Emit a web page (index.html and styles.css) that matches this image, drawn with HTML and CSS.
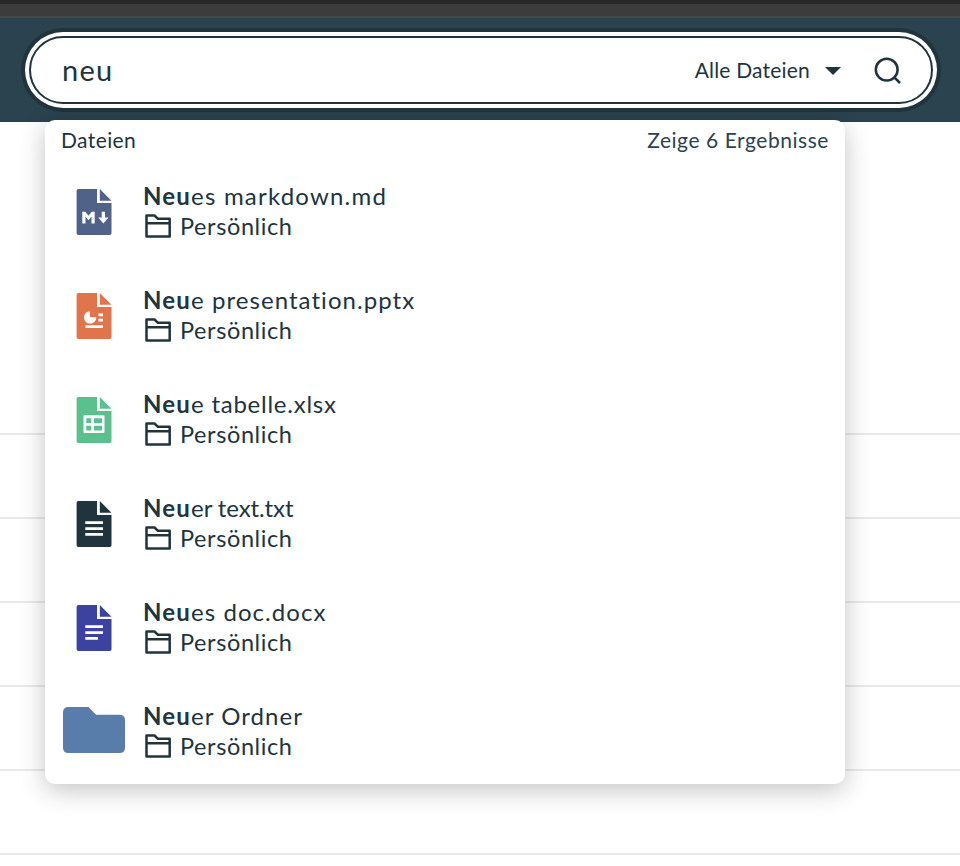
FILE: index.html
```html
<!DOCTYPE html>
<html lang="de">
<head>
<meta charset="utf-8">
<title>Suche</title>
<link rel="stylesheet" href="styles.css">
</head>
<body>
<svg class="defs" width="0" height="0" aria-hidden="true">
  <symbol id="page" viewBox="0 0 36 48"><path d="M3 1H21V15H35.500V45.200Q35.500 47 33.700 47H2.400Q.6 47 .6 45.200V2.800Q.6 1 2.400 1Z"/><path d="M23.800 1 35.500 12.800H23.800Z"/></symbol>
  <symbol id="location" viewBox="0 0 28 26"><path d="M2.500 2.500H10.500L14 5.800H25.700V23.500H2.500ZM2.500 10.200H25.700" fill="none" stroke="currentColor" stroke-width="2.500" stroke-linejoin="round"/></symbol>
</svg>
<header class="topbar">
  <div class="search">
    <span class="query">neu</span>
    <span class="scope">Alle Dateien</span>
    <svg class="caret" viewBox="0 0 16 8"><path d="M0 0H16L8 8Z"/></svg>
    <svg class="lens" viewBox="0 0 28 28"><circle cx="12.700" cy="12.700" r="10.900"/><path d="M20.300 20.300 26 26"/></svg>
  </div>
  <section class="results">
    <div class="results-head"><span class="group">Dateien</span><span class="count">Zeige 6 Ergebnisse</span></div>
    <ul>
      <li>
        <svg class="file md" viewBox="0 0 36 48"><use href="#page"/><path class="mark" d="M6.300 35.500V23.700H9.300L12.500 27.700 15.700 23.700H18.700V35.500H15.500V28.500L12.500 32.200 9.500 28.500V35.500ZM25.700 23.700H29V29.500H32.500L27.300 35.500 22.200 29.500H25.700Z"/></svg>
        <div class="info"><p class="name wide"><b>Neu</b>es markdown.md</p><p class="place"><svg><use href="#location"/></svg>Persönlich</p></div>
      </li>
      <li>
        <svg class="file pptx" viewBox="0 0 36 48"><use href="#page"/><path class="mark" d="M14 19.200V25.200H20.300A6.200 6.200 0 1 1 14 19.200ZM22.500 21.500H27V24.200H22.500ZM22.500 26.700H27V29.400H22.500ZM9.500 33.200H27V36H9.500Z"/></svg>
        <div class="info"><p class="name"><b>Neu</b>e presentation.pptx</p><p class="place"><svg><use href="#location"/></svg>Persönlich</p></div>
      </li>
      <li>
        <svg class="file xlsx" viewBox="0 0 36 48"><use href="#page"/><path class="mark" fill-rule="evenodd" d="M8.500 19.300H27.500Q28.500 19.300 28.500 20.300V36Q28.500 37 27.500 37H8.500Q7.500 37 7.500 36V20.300Q7.500 19.300 8.500 19.300ZM10.300 22.300V27H15.300V22.300ZM18 22.300V27H26V22.300ZM10.300 29.700V34.400H15.300V29.700ZM18 29.700V34.400H26V29.700Z"/></svg>
        <div class="info"><p class="name snug"><b>Neu</b>e tabelle.xlsx</p><p class="place"><svg><use href="#location"/></svg>Persönlich</p></div>
      </li>
      <li>
        <svg class="file txt" viewBox="0 0 36 48"><use href="#page"/><path class="mark" d="M9.300 21.200H27V24H9.300ZM9.300 27.200H27V30H9.300ZM9.300 33H27V35.800H9.300Z"/></svg>
        <div class="info"><p class="name tight"><b>Neu</b>er text.txt</p><p class="place"><svg><use href="#location"/></svg>Persönlich</p></div>
      </li>
      <li>
        <svg class="file docx" viewBox="0 0 36 48"><use href="#page"/><path class="mark" d="M9.300 21.200H27V24H9.300ZM9.300 27.200H27V30H9.300ZM9.300 33H22V35.800H9.300Z"/></svg>
        <div class="info"><p class="name"><b>Neu</b>es doc.docx</p><p class="place"><svg><use href="#location"/></svg>Persönlich</p></div>
      </li>
      <li>
        <svg class="folder" viewBox="0 0 64 48"><path d="M6.500 1H26.500L34 8.700H57.500Q63 8.700 63 14.200V41.500Q63 47 57.500 47H6.500Q1 47 1 41.500V6.500Q1 1 6.500 1Z"/></svg>
        <div class="info"><p class="name"><b>Neu</b>er Ordner</p><p class="place"><svg><use href="#location"/></svg>Persönlich</p></div>
      </li>
    </ul>
  </section>
</header>
<main class="listing"><div></div><div></div><div></div><div></div><div></div><div></div></main>
</body>
</html>
```

FILE: styles.css
```css
* { box-sizing: border-box; margin: 0; padding: 0; }
body { height: 866px; overflow: hidden; background: #fff; color: #20343e; font-family: Lato, "Open Sans", sans-serif; }
.defs { display: block; position: absolute; }
.topbar { position: relative; height: 122px; padding: 32px 27px 0 29px; border-top: 4px solid #282828; background: linear-gradient(#3c3c3c 0 12px, #444a4a 12px 14px, #2b434f 14px); }
.search { display: flex; align-items: center; height: 68px; border: 2px solid #20343e; border-radius: 34px; background: #fff; box-shadow: 0 0 0 4px #fff, 0 0 0 8px #20343e; padding: 0 29px 0 31px; }
.query { flex: 1; padding-bottom: 2px; font-size: 29px; letter-spacing: 1.2px; }
.scope { padding-bottom: 2px; font-size: 21px; letter-spacing: .2px; }
.caret { width: 16px; height: 8px; margin: 2px 33px 0 15px; fill: #20343e; }
.lens { width: 28px; height: 28px; margin-top: 1px; fill: none; stroke: #20343e; stroke-width: 2.5; }
.results { position: absolute; z-index: 1; top: 116px; left: 45px; width: 800px; height: 664px; border-radius: 10px; background: #fff; box-shadow: 0 6px 26px rgba(0, 0, 0, .24); }
.results-head { display: flex; justify-content: space-between; height: 40px; padding: 0 16px; line-height: 39px; font-size: 21px; }
.group { letter-spacing: .4px; }
.count { color: #2b434f; letter-spacing: .55px; }
ul { list-style: none; }
li { display: flex; align-items: center; height: 104px; padding-left: 17px; }
.file { width: 36px; height: 48px; margin: 0 31px 0 14px; }
.folder { width: 64px; height: 48px; margin: 0 17px 4px 0; fill: #587daa; }
.file .mark { fill: #fff; }
.md { fill: #506288; }
.pptx { fill: #e0754b; }
.xlsx { fill: #5ac18e; }
.txt { fill: #20343e; }
.docx { fill: #3c429f; }
.info { padding-bottom: 2px; }
.name, .place { height: 30px; line-height: 30px; font-size: 24px; white-space: nowrap; }
.name { letter-spacing: 1.05px; }
.name.wide { letter-spacing: 1.2px; }
.name.snug { letter-spacing: .75px; }
.name.tight { letter-spacing: -.1px; }
.name b { font-weight: 700; letter-spacing: 1.2px; }
.place { display: flex; align-items: center; font-size: 23.5px; letter-spacing: .6px; }
.place svg { width: 28px; height: 26px; margin: 0 8px 0 1px; }
.listing div { height: 84px; border-bottom: 2px solid #e9ebeb; }
.listing div:first-child { height: 313px; }
```
